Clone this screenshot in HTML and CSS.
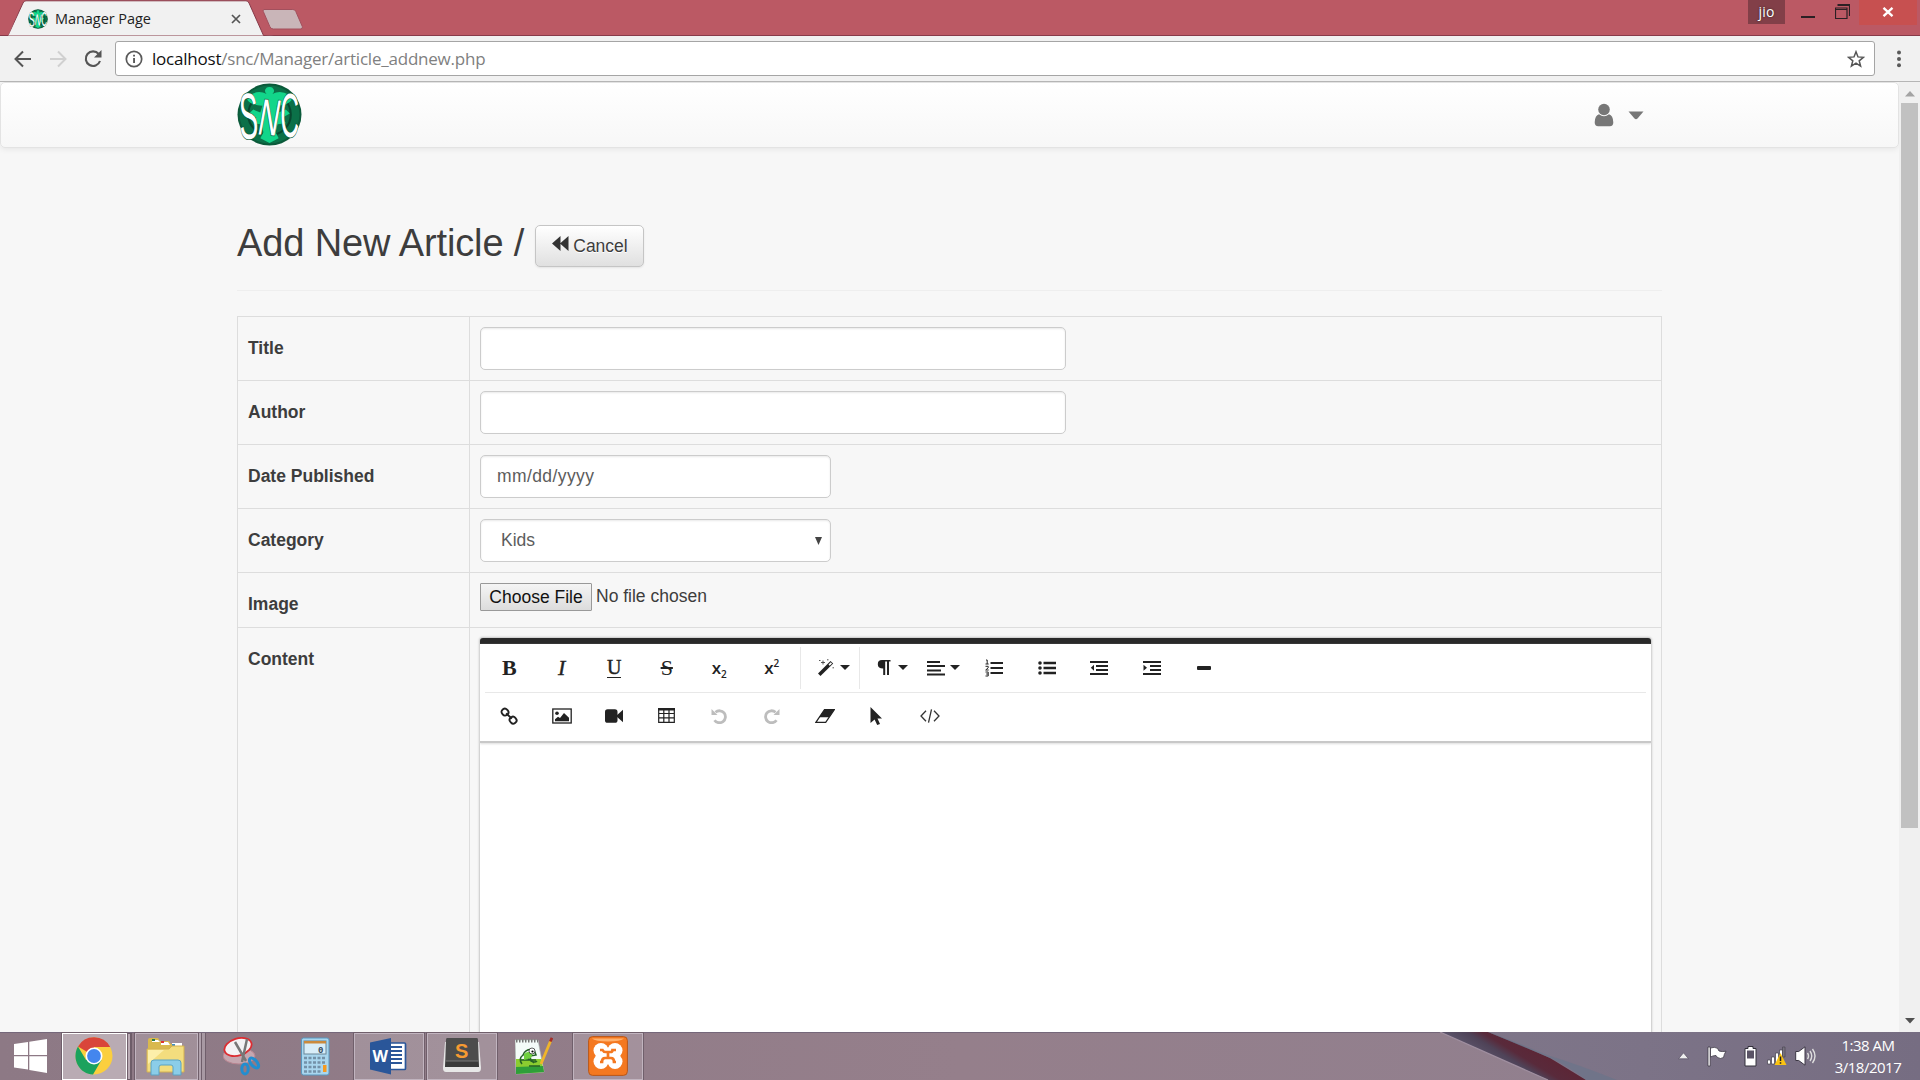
FILE: index.html
```
<!DOCTYPE html>
<html lang="en">
<head>
<meta charset="utf-8">
<title>Manager Page</title>
<link rel="stylesheet" href="styles.css">
</head>
<body>
<svg class="defs" aria-hidden="true">
  <defs>
    <symbol id="snc" viewBox="0 0 64 64">
      <circle cx="32" cy="32" r="31.5" fill="#0b5a3a"/>
      <circle cx="32" cy="32" r="29.5" fill="#0b7048"/>
      <circle cx="32" cy="32" r="21" fill="none" stroke="#08472f" stroke-width="2"/>
      <path fill="#12d68a" d="M32 4a4 4 0 0 1 3 7q8-4 16 1l3 5q-4 6-15 6l2 7 7-3 4 4-7 4 3 6-8 1-2 8 3 6-9 5-9-5 3-6-2-8-8-1 3-6-7-4 4-4 7 3 2-7q-11 0-15-6l3-5q8-5 16-1a4 4 0 0 1 3-7z"/>
      <g fill="#fff" stroke="#0b5a3a" stroke-width="1.5" paint-order="stroke" font-family="Liberation Sans, sans-serif">
        <text transform="translate(3 57) rotate(-2) scale(.42 1)" font-size="66">S</text>
        <text transform="translate(19 52) rotate(4) skewX(-6) scale(.54 1)" font-size="52">N</text>
        <text transform="translate(42.500 55) scale(.4 1)" font-size="64">C</text>
      </g>
    </symbol>
  </defs>
</svg>

<header class="browser">
  <div class="tabstrip">
    <svg class="tabshape" width="320" height="36" viewBox="0 0 320 36">
      <path d="M0 35.5H8L23 3Q24 .8 26 .8H246Q248 .8 249 3L263.500 35.500H320V36H0z" fill="#f1f1f1" stroke="#873a49"/>
      <path d="M263.800 9.500h29q2.500 0 3 2l6.500 15q1 2.500-2 2.500h-27q-2.500 0-3.500-2.500l-6.500-15q-.7-2 .5-2z" fill="#c9b5b8" stroke="#a2505d"/>
    </svg>
    <div class="tab">
      <svg class="favicon" width="20" height="20"><use href="#snc"/></svg>
      <span class="tab-title">Manager Page</span>
      <svg class="tab-close" width="10" height="10" viewBox="0 0 10 10"><path d="M1 1l8 8M9 1L1 9" stroke="#555" stroke-width="1.700"/></svg>
    </div>
    <div class="winctl">
      <span class="profile">jio</span>
      <svg class="wc-min" width="14" height="25" viewBox="0 0 14 25"><path d="M0 16h14v2H0z" fill="#2b2024"/></svg>
      <svg class="wc-max" width="15" height="25" viewBox="0 0 15 25"><path d="M.5 8h11.500v10.500H.5zM0 9.500h12M2.500 4.500h12v11.500M2.500 5.500h12" fill="none" stroke="#2b2024" stroke-width="1.200"/></svg>
      <span class="wc-close"><svg width="12" height="10" viewBox="0 0 12 10"><path d="M1.500.8l9 8.400M10.500.8l-9 8.400" stroke="#fff" stroke-width="2.300"/></svg></span>
    </div>
  </div>
  <div class="toolbar">
    <svg class="nav back" width="18" height="18" viewBox="0 0 18 18"><path d="M17 9H2M9 1.500L1.500 9 9 16.500" fill="none" stroke="#555" stroke-width="2"/></svg>
    <svg class="nav fwd" width="18" height="18" viewBox="0 0 18 18"><path d="M1 9h15M9 1.500L16.500 9 9 16.500" fill="none" stroke="#d0d0d0" stroke-width="2"/></svg>
    <svg class="nav reload" width="18" height="18" viewBox="0 0 18 18"><path d="M14.700 4A7.300 7.300 0 1 0 16 11" fill="none" stroke="#555" stroke-width="2.100"/><path d="M17.500 0v7.500H10z" fill="#555"/></svg>
    <div class="omnibox">
      <svg width="18" height="18" viewBox="0 0 18 18"><circle cx="9" cy="9" r="7.700" fill="none" stroke="#5a5a5a" stroke-width="1.700"/><path d="M8.100 8h1.900v5H8.100zM8.100 4.700h1.900v1.900H8.100z" fill="#5a5a5a"/></svg>
      <span class="url"><b>localhost</b>/snc/Manager/article_addnew.php</span>
      <svg class="star" width="18" height="18" viewBox="0 0 18 18"><path d="M9 1.800l2 5.100 5.400.4-4.200 3.500 1.400 5.300L9 13.200l-4.600 2.900 1.400-5.300L1.600 7.300 7 6.900z" fill="none" stroke="#555" stroke-width="1.500"/></svg>
    </div>
    <svg class="dots" width="6" height="18" viewBox="0 0 6 18"><g fill="#5a5a5a"><circle cx="3" cy="2.500" r="2"/><circle cx="3" cy="9" r="2"/><circle cx="3" cy="15.300" r="2"/></g></svg>
  </div>
</header>

<div class="viewport">
  <main class="page">
    <nav class="navbar">
      <svg class="logo" width="65" height="63" viewBox="0 0 64 64" preserveAspectRatio="none"><use href="#snc" width="64" height="64"/></svg>
      <div class="user">
        <svg width="20" height="24" viewBox="0 0 20 24"><circle cx="10" cy="6.500" r="5.800"/><path d="M5 11.300q5 4 10 0 4 1 4.300 8 0 4-3.500 4H4.200Q.7 23.300.7 19.300 1 12.300 5 11.300z"/></svg>
        <svg width="16" height="9" viewBox="0 0 16 9"><path d="M.5.500h15L9.500 7.500q-1.500 1.500-3 0z"/></svg>
      </div>
    </nav>
    <div class="container">
      <div class="heading">
        <h2>Add New Article /</h2>
        <span class="btn"><svg width="17" height="15" viewBox="0 0 17 15"><path d="M8.500 0v15L0 7.500zM16.500 0v15L8 7.500z" fill="#333"/></svg><span>Cancel</span></span>
      </div>
      <div class="form">
        <div class="row"><div class="label">Title</div><div class="cell"><div class="input wide"></div></div></div>
        <div class="row"><div class="label">Author</div><div class="cell"><div class="input wide"></div></div></div>
        <div class="row"><div class="label">Date Published</div><div class="cell"><div class="input date">mm/dd/yyyy</div></div></div>
        <div class="row"><div class="label">Category</div><div class="cell"><div class="input select"><span>Kids</span><svg width="7" height="8" viewBox="0 0 7 8"><path d="M0 0h7L3.500 8z" fill="#444"/></svg></div></div></div>
        <div class="row file-row"><div class="label">Image</div><div class="cell file"><span class="choose">Choose File</span><span class="nofile">No file chosen</span></div></div>
        <div class="row content-row"><div class="label">Content</div><div class="cell">
          <div class="editor">
            <div class="tools">
              <div class="toolrow first">
                <span class="tool"><b class="g bold">B</b></span>
                <span class="tool"><i class="g">I</i></span>
                <span class="tool"><span class="g under">U</span></span>
                <span class="tool"><span class="g strike">S</span></span>
                <span class="tool"><span class="x">x<sub>2</sub></span></span>
                <span class="tool"><span class="x">x<sup>2</sup></span></span>
                <span class="tool drop wand"><svg width="18" height="18" viewBox="0 0 18 18"><path d="M1 14.500L13.500 2l2.700 2.500L3.500 17z" fill="#222"/><path d="M11.500 5.500l2.300-2.200 1.200 1.200-2.300 2.200z" fill="#fff"/><path d="M6 1.500v4M4 3.500h4M2 1.500h1.500M10 .8h1.500M15.500 8.800H17" stroke="#444" stroke-width=".9"/></svg><em></em></span>
                <span class="tool drop para"><svg width="14" height="17" viewBox="0 0 14 17"><path d="M5 1h8.500v1.600H12V16h-2V2.600H8.200V16h-2V9.500Q.8 9.500.8 5.200.8 1 5 1z" fill="#222"/></svg><em></em></span>
                <span class="tool drop align"><svg width="18" height="16" viewBox="0 0 18 16"><path d="M0 2h13M0 6h18M0 10.500h14M0 14.500h18" stroke="#222" stroke-width="2.200"/></svg><em></em></span>
                <span class="tool ol"><svg width="18" height="18" viewBox="0 0 18 18"><path d="M5.500 4H18M5.500 9H18M5.500 14H18" stroke="#222" stroke-width="2.200"/><path d="M1 1h1.200v4M.5 5h3.200M.5 7.300h2.700v1.500L.7 11h3M.5 13h2.700v4H.5M1.200 15h2" fill="none" stroke="#222"/></svg></span>
                <span class="tool"><svg width="18" height="16" viewBox="0 0 18 16"><path d="M5.500 3H18M5.500 8H18M5.500 13H18" stroke="#222" stroke-width="2.300"/><g fill="#222"><circle cx="2" cy="3" r="1.800"/><circle cx="2" cy="8" r="1.800"/><circle cx="2" cy="13" r="1.800"/></g></svg></span>
                <span class="tool"><svg width="18" height="16" viewBox="0 0 18 16"><path d="M0 2h18M6 6h12M6 10h12M0 14h18" stroke="#222" stroke-width="2.100"/><path d="M4 4.800v6L.8 7.800z" fill="#222"/></svg></span>
                <span class="tool"><svg width="18" height="16" viewBox="0 0 18 16"><path d="M0 2h18M7 6h11M7 10h11M0 14h18" stroke="#222" stroke-width="2.100"/><path d="M.5 4.800v6L4 7.800z" fill="#222"/></svg></span>
                <span class="tool"><svg width="14" height="16" viewBox="0 0 14 16"><rect y="6" width="14" height="4" rx="1" fill="#222"/></svg></span>
              </div>
              <div class="toolrow second">
                <span class="tool"><svg width="18" height="18" viewBox="0 0 18 18"><g fill="none" stroke="#222" stroke-width="1.900"><rect x="1.800" y="1.600" width="6.300" height="6.800" rx="2.800" transform="rotate(-40 5 5)"/><rect x="9.800" y="9.800" width="6.300" height="6.800" rx="2.800" transform="rotate(-40 13 13)"/><path d="M6 6.500l6 5"/></g></svg></span>
                <span class="tool"><svg width="20" height="16" viewBox="0 0 20 16"><rect x=".8" y="1" width="18.400" height="14" fill="none" stroke="#222" stroke-width="1.300"/><circle cx="5" cy="5.200" r="1.800" fill="#222"/><path d="M3 13.300v-2l3-2.500 2 1.300 4-5 5 4.700v3.500z" fill="#222"/></svg></span>
                <span class="tool"><svg width="18" height="14" viewBox="0 0 18 14"><rect width="12.500" height="13.500" y=".3" rx="2.600" fill="#222"/><path d="M11 7l7-6.300v12.600z" fill="#222"/></svg></span>
                <span class="tool"><svg width="17" height="15" viewBox="0 0 17 15"><path d="M.7 1h15.600v13.300H.7zM.7 5.500h15.600M.7 9.900h15.600M5.800 1v13M11 1v13" fill="none" stroke="#222" stroke-width="1.200"/><path d="M0 0h17v2.500H0z" fill="#222"/></svg></span>
                <span class="tool"><svg width="17" height="16" viewBox="0 0 17 16"><path d="M4.500 4.200A6 6 0 1 1 3.500 12.200" fill="none" stroke="#bdbdbd" stroke-width="2.800"/><path d="M.5 1v6h6z" fill="#bdbdbd"/></svg></span>
                <span class="tool"><svg width="17" height="16" viewBox="0 0 17 16"><path d="M12.500 4.200A6 6 0 1 0 13.500 12.200" fill="none" stroke="#bdbdbd" stroke-width="2.800"/><path d="M16.500 1v6h-6z" fill="#bdbdbd"/></svg></span>
                <span class="tool wide-gap"><svg width="20" height="14" viewBox="0 0 20 14"><path d="M9.500.7h9.800L10.700 13.300H.9z" fill="#fff" stroke="#222" stroke-width="1.200"/><path d="M9.500.5h9.800L14 8.300H4.200z" fill="#222"/></svg></span>
                <span class="tool cursor"><svg width="12" height="18" viewBox="0 0 12 18"><path d="M.5 0L12 11.500H7.500L10 17l-2.800 1L4.600 12.600.5 16z" fill="#222"/></svg></span>
                <span class="tool wide-gap"><svg width="20" height="14" viewBox="0 0 20 14"><path d="M6 1.800L1 7l5 5.200M14 1.800L19 7l-5 5.200M11.500.4L8.500 13.600" fill="none" stroke="#333" stroke-width="1.300"/></svg></span>
              </div>
            </div>
            <div class="editbox"></div>
          </div>
        </div></div>
      </div>
    </div>
  </main>
  <aside class="scrollbar">
    <svg width="10" height="6" viewBox="0 0 10 6"><path d="M5 0l5 5.500H0z" fill="#a3a3a3"/></svg>
    <div class="thumb"></div>
    <svg class="down" width="10" height="6" viewBox="0 0 10 6"><path d="M0 0h10L5 5.500z" fill="#505050"/></svg>
  </aside>
</div>

<footer class="taskbar">
  <svg class="streak" width="560" height="48" viewBox="0 0 560 48">
    <defs>
      <linearGradient id="wall" x2="1"><stop offset="0" stop-color="#7f7689"/><stop offset=".4" stop-color="#7c7387"/><stop offset="1" stop-color="#766d82"/></linearGradient>
      <linearGradient id="band" gradientUnits="userSpaceOnUse" x1="130" y1="28" x2="147" y2="0"><stop offset="0" stop-color="#5a5268"/><stop offset=".35" stop-color="#4f4358"/><stop offset=".6" stop-color="#592a3b"/><stop offset="1" stop-color="#5c2636"/></linearGradient>
    </defs>
    <path d="M100 0H560V48H200z" fill="url(#wall)"/>
    <path d="M80 0h48q35 14 62 26l36 22h-38z" fill="url(#band)"/>
    <path d="M80 0L188 48" stroke="#a08fa0" stroke-width="1.200"/>
    <path d="M129 0q30 11 58 23 30 9 70 25h-31q-16-13-36-22-31-13-62-26z" fill="#67758b" opacity=".6"/>
  </svg>
  <div class="apps">
    <svg class="start" width="33" height="34" viewBox="0 0 33 34"><path d="M0 5l14-2v13H0zM15.300 2.700L33 0v16H15.300zM0 17.300h14v13.200L0 28.500zM15.300 17.300H33V34l-17.700-3z" fill="#fff"/></svg>
    <div class="app active double"><svg width="38" height="38" viewBox="0 0 38 38"><circle cx="19" cy="19" r="18.500" fill="#fbcf3f"/><path d="M19 19L3 9.500A18.500 18.500 0 0 1 35.200 10H19z" fill="#d9453a"/><path d="M3 9.600A18.500 18.500 0 0 0 18 37.500L26.500 23 19 19 11 23z" fill="#1ba25d"/><circle cx="19" cy="19" r="8.500" fill="#fff"/><circle cx="19" cy="19" r="6.900" fill="#4486ee"/></svg></div>
    <div class="app triple"><svg width="40" height="39" viewBox="0 0 40 39"><path d="M2 3q0-2 2-2h8l2 3h9l2 3h11v10H2z" fill="#d9b94e"/><path d="M6 3h6l2 2H6zM15 5h7l2 3h-9z" fill="#fff"/><path d="M6 2h3v2H6z" fill="#287c4b"/><path d="M15 4h3v2h-3z" fill="#d33"/><path d="M26 6h10v5H26z" fill="#fff"/><path d="M26 7h3v3h-3z" fill="#3f8fc9"/><path d="M1 12h22l3-3h12v26H1z" fill="#f3dd7e" stroke="#d4b151"/><path d="M2 13h16L2 27z" fill="#fff6bd" opacity=".7"/><path d="M5 38V26q0-3 3-3h24q3 0 3 3v12h-8v-8q0-2-2-2H15q-2 0-2 2v8z" fill="#8bcde8" stroke="#5aa3c4"/></svg></div>
    <svg class="snip" width="38" height="39" viewBox="0 0 38 39"><ellipse cx="16" cy="19" rx="16" ry="8" fill="#c5a7b0" stroke="#b98490"/><ellipse cx="15" cy="10" rx="14" ry="8.500" fill="#f4f2f4" stroke="#dc2d32" stroke-width="1.800" transform="rotate(-17 15 10)"/><path d="M12 5l11 19M24 2L19 25" stroke="#777" stroke-width="2.500"/><g fill="none" stroke="#218ed0" stroke-width="3"><ellipse cx="31" cy="26" rx="3" ry="6" transform="rotate(-42 31 26)"/><ellipse cx="22" cy="32" rx="3.200" ry="5"/></g></svg>
    <svg class="calc" width="29" height="39" viewBox="0 0 29 39"><rect x=".5" y="1" width="27.500" height="37" rx="2" fill="#a9d6ee" stroke="#5898bf"/><rect x="3" y="4" width="22" height="13" fill="#d8edf8" stroke="#6b8698"/><path d="M3 4h22v2.500H3z" fill="#ca8a3d"/><text x="17" y="16" font-family="Liberation Mono, monospace" font-weight="700" font-size="9" fill="#31485c">0</text><path d="M3 21h22M3 25.500h22M3 30h17M3 34.500h17" stroke="#7391a8" stroke-width="2.600" stroke-dasharray="3 1.500"/><path d="M22 28h3.500v7H22z" fill="#f59a21"/></svg>
    <div class="app word"><svg width="37" height="37" viewBox="0 0 37 37"><rect x="18" y="5" width="17.500" height="26.500" rx="1" fill="#fff" stroke="#2a5699" stroke-width="1.700"/><path d="M21 9h11M21 13h11M21 17h11M21 21h11M21 25h11" stroke="#2a5699" stroke-width="2"/><path d="M0 4.500L21 0v36.500L0 31.500z" fill="#2a5699"/><text x="2.500" y="24" font-family="Open Sans, sans-serif" font-weight="700" font-size="16" fill="#fff">W</text></svg></div>
    <div class="app sublime"><svg width="38" height="37" viewBox="0 0 38 37"><path d="M2 4h34l2 26q0 4-3 4H3q-3 0-3-4z" fill="#e7e7e7"/><path d="M4 0h30q1 0 1 2l1 27H2L3 2q0-2 1-2z" fill="#4c4c4c"/><path d="M3 23h32l1 6H2z" fill="#3a3a3a"/><path d="M3 23h32" stroke="#777"/><text x="12" y="20" font-family="Liberation Sans, sans-serif" font-weight="700" font-size="20" fill="#f69a32">S</text></svg></div>
    <svg class="npp" width="38" height="38" viewBox="0 0 38 38"><path d="M0 3h23l6 32-28 2z" fill="#f4fbf8" stroke="#a9b9b0" stroke-width=".6"/><path d="M1 22h25l3 13-28 2z" fill="#8bcd30"/><path d="M1 30l27-1 1 6-28 2z" fill="#2f9f39"/><path d="M1 4h22" stroke="#777" stroke-width="3" stroke-dasharray="1.500 1.500"/><path d="M7 27q-4-5 1-9 3-7 11-5l2 5-6 1 1 5q4 2 6 0M5 23h16M9 18l10 8M14 29h11" fill="none" stroke="#256226" stroke-width="1.500"/><path d="M9 17q5-4 9-1l-2 5-7 2z" fill="#6fd03c"/><circle cx="17" cy="14" r="3" fill="#fff" stroke="#222" stroke-width=".7"/><circle cx="17.500" cy="14.500" r="1.100"/><path d="M26 27l10-24" stroke="#efb52a" stroke-width="2.800"/><path d="M35.300 4.500L37 .8" stroke="#a52e29" stroke-width="2.800"/></svg>
    <div class="app xampp"><svg width="40" height="40" viewBox="0 0 40 40"><rect x=".6" y=".6" width="38.800" height="38.800" rx="4" fill="#f47820" stroke="#b85719"/><path d="M4 2.500h32q-3 3-16 3T4 2.500z" fill="#ffb16e"/><g fill="#fff"><circle cx="13" cy="14.500" r="7.500"/><circle cx="27" cy="14.500" r="7.500"/><circle cx="13" cy="25.500" r="7.500"/><circle cx="27" cy="25.500" r="7.500"/><path d="M13 12h14v16H13z"/></g><path d="M12 14h2.500q1 2 3 2h5q2 0 2-2H28M12 26h2q0-4 3-4h6q3 0 3 4h2M20 16v6" fill="none" stroke="#f47820" stroke-width="2.700"/></svg></div>
  </div>
  <div class="tray">
    <svg class="t-arrow" width="11" height="8" viewBox="0 0 11 8"><path d="M5.500.8l5 6H.5z" fill="#eee" stroke="#554d60" stroke-width=".7"/></svg>
    <svg class="t-flag" width="20" height="21" viewBox="0 0 20 21"><path d="M1 1h2.200v19H1z" fill="#fff" stroke="#3c3744" stroke-width=".8"/><path d="M3.500 2q4-1.500 7 .3l1.500 2.700q3 1 7 .2-2 3-2.500 6.300-3 2-6 0l-1.500-2q-3 0-5.500 1.500z" fill="#fff" stroke="#3c3744" stroke-width=".8"/></svg>
    <svg class="t-bat" width="13" height="21" viewBox="0 0 13 21"><path d="M4 .5h5v2h3V20H1V2.500h3z" fill="#fff" stroke="#33303b"/><path d="M3 4.500h7v8H3z" fill="#5a5365"/></svg>
    <svg class="t-sig" width="20" height="20" viewBox="0 0 20 20"><path d="M.5 14h3v4h-3zM4.500 11h3v7h-3zM8.500 7h3v11h-3z" fill="#fff" stroke="#44404c" stroke-width=".7"/><path d="M12.500 4h3v14h-3z" fill="#fff" stroke="#44404c" stroke-width=".7"/><path d="M15.500 1h2.500v10h-2.500z" fill="#77737f" stroke="#44404c" stroke-width=".6"/><path d="M13.500 7l6 12h-12z" fill="#fbc311"/><path d="M13.500 10.500v4.500M13.500 16.200v1.500" stroke="#222" stroke-width="1.500"/></svg>
    <svg class="t-vol" width="21" height="20" viewBox="0 0 21 20"><path d="M.7 5.500h3L10 .8v18.400L3.700 14.500h-3z" fill="#fff" stroke="#3c3744"/><path d="M12.500 7q2 3 0 6M15 5q3.500 5 0 10M17.500 3q5 7 0 14" fill="none" stroke="#ddd" stroke-width="1.400"/></svg>
    <div class="clock"><span>1:38 AM</span><span>3/18/2017</span></div>
  </div>
</footer>
</body>
</html>
```
FILE: styles.css
```
* { box-sizing: border-box; }
body { margin: 0; width: 1920px; height: 1080px; overflow: hidden; display: flex; flex-direction: column; background: #f7f7f7; color: #3d3d3d; font: 17.5px/25px "Liberation Sans", Arial, sans-serif; }
svg { display: block; flex: none; }
.defs { position: absolute; width: 0; height: 0; }

/* Browser frame */
.browser { height: 82px; flex: none; background: #f1f1f1; border-bottom: 1px solid #b5b5b5; font-family: "Open Sans", "Noto Sans", sans-serif; }
.tabstrip { position: relative; height: 36px; display: flex; justify-content: space-between; background: #bb5964; border-bottom: 1px solid #873a49; }
.tabshape { position: absolute; left: 0; top: 0; clip-path: polygon(8px 36px, 23px 0, 302px 0, 304px 32px, 264px 36px); }
.tab { position: relative; display: flex; align-items: center; height: 36px; padding: 2px 0 0 28px; width: 248px; }
.tab-title { margin: -2px 0 0 7px; font-size: 14.5px; color: #222; letter-spacing: -.05px; white-space: nowrap; }
.tab-close { margin-left: auto; margin-right: 7px; }
.winctl { display: flex; height: 25px; margin-right: 3px; }
.profile { width: 37px; height: 24px; background: #823f48; color: #fff; font-size: 14px; line-height: 23px; text-align: center; letter-spacing: .2px; text-shadow: 0 0 2px #222; }
.wc-min { margin-left: 16px; }
.wc-max { margin-left: 20px; }
.wc-close { width: 58px; height: 25px; margin-left: 9px; background: #c75050; display: flex; align-items: center; justify-content: center; padding: 0 1px 2px 0; }
.toolbar { display: flex; align-items: center; height: 45px; padding: 0 18px 0 14px; }
.fwd { margin-left: 17px; }
.reload { margin-left: 17px; }
.omnibox { flex: 1; display: flex; align-items: center; height: 35px; margin: 0 21px 0 13px; padding: 0 9px 0 9px; background: #fff; border: 1px solid #a5a5a5; border-radius: 3px; }
.url { margin-left: 9px; font-size: 17px; letter-spacing: -.22px; color: #808080; }
.url b { font-weight: 400; color: #111; }
.star { margin-left: auto; }

/* Page */
.viewport { flex: 1; min-height: 0; display: flex; overflow: hidden; }
.page { width: 1899px; overflow: hidden; }
.navbar { display: flex; align-items: center; justify-content: space-between; height: 66px; padding: 0 254px 0 236px; background: linear-gradient(#fff, #f7f7f7); border: 1px solid #e3e3e3; border-radius: 5px; box-shadow: 0 1px 6px rgba(0,0,0,.08); }
.logo { margin-top: -1px; }
.user { display: flex; align-items: center; gap: 14px; fill: #777; }
.container { width: 1425px; margin-left: 237px; }
.heading { display: flex; height: 143px; border-bottom: 1px solid #eee; }
.heading h2 { margin: 70px 0 0; width: 298px; font-size: 38px; line-height: 50px; font-weight: 400; letter-spacing: -.12px; white-space: nowrap; }
.btn { display: flex; justify-content: center; gap: 4px; height: 42px; width: 109px; margin-top: 77px; padding: 8px 0 0 1px; border: 1px solid #c5c5c5; border-radius: 5px; background: linear-gradient(#fff, #e0e0e0); box-shadow: 0 1px 2px rgba(0,0,0,.08); text-shadow: 0 1px #fff; }
.btn svg { margin-top: 2px; }
.form { margin-top: 25px; border: 1px solid #ddd; border-bottom: 0; }
.row { display: flex; height: 64px; border-bottom: 1px solid #ddd; }
.label { width: 232px; padding: 19px 0 0 10px; font-weight: 700; border-right: 1px solid #ddd; }
.cell { flex: 1; padding: 10px; }
.input { height: 43px; padding: 8px 16px; line-height: 25px; background: #fff; border: 1px solid #ccc; border-radius: 5px; box-shadow: inset 0 1px 2px rgba(0,0,0,.09); color: #5c5c5c; }
.wide { width: 586px; }
.date, .select { width: 351px; }
.date { letter-spacing: .4px; }
.select { display: flex; justify-content: space-between; align-items: center; padding: 0 8px 0 20px; }
.file-row { height: 55px; }
.file { display: flex; gap: 4px; }
.choose { height: 28px; width: 112px; border: 1px solid #999; background: linear-gradient(#f5f5f5, #dcdcdc); color: #111; text-align: center; line-height: 26px; border-radius: 1px; }
.nofile { line-height: 27px; }
.content-row { height: 460px; }
.editor { width: 1171px; height: 450px; border-top: 6px solid #292929; border-radius: 3px 3px 0 0; background: #fff; box-shadow: 0 0 2px 1px #c6c6c6; }
.tools { height: 99px; padding: 0 5px; border-bottom: 2px solid #c8c8c8; box-shadow: 0 1px 2px #ddd; }
.toolrow { display: flex; height: 47px; align-items: center; color: #222; }
.first { height: 49px; padding-bottom: 1px; border-bottom: 1px solid #e8e8e8; }
.second { height: 45px; }
.toolrow .tool:first-child { width: 50.5px; padding-right: 2px; }
.tool { width: 52.5px; height: 100%; display: flex; align-items: center; justify-content: center; flex: none; }
.drop { gap: 6px; height: 42px; }
.drop em { border: 5px solid transparent; border-top-color: #222; border-bottom: 0; }
.wand { width: 60px; margin-left: 2px; padding-left: 6px; gap: 5px; border: 1px solid #e8e8e8; border-width: 0 1px; }
.para { width: 51px; margin-left: 7px; gap: 7px; }
.align { width: 51px; gap: 5px; margin-left: 0; }
.ol { margin-left: -1px; }
.g { font: 22px/24px "Liberation Serif", serif; }
.bold { font-weight: 700; }
i.g { font-style: italic; -webkit-text-stroke: .4px #222; }
.under { font-size: 20px; line-height: 19px; border-bottom: 1px solid #222; -webkit-text-stroke: .4px #222; }
.strike { text-decoration: line-through; }
.x { font: 600 17px/20px "Open Sans", sans-serif; }
.x sub, .x sup { font-size: 10px; line-height: 0; }
.cursor { padding-right: 2px; }
.wide-gap { padding-left: 1px; }
.scrollbar { width: 21px; background: #f0f0f0; padding: 9px 2px 8px; display: flex; flex-direction: column; align-items: flex-start; }
.scrollbar svg { margin-left: 4px; }
.thumb { width: 17px; height: 725px; margin-top: 6px; background: #c1c1c1; }
.scrollbar .down { margin-top: auto; }

/* Taskbar */
.taskbar { position: relative; flex: none; height: 48px; display: flex; justify-content: space-between; background: linear-gradient(90deg, #8d7985, #957f8b 50%, #8f8090); box-shadow: inset 0 1px #75677a; font-family: "Open Sans", sans-serif; }
.streak { position: absolute; right: 0; top: 0; }
.apps, .tray { position: relative; display: flex; align-items: center; }
.start { margin: 0 15px 0 14px; }
.app { display: flex; align-items: center; justify-content: center; height: 47px; width: 70px; padding-right: 1px; background: rgba(255,255,255,.16); border: 1px solid #c1b4bf; outline: 1px solid #705f6b; outline-offset: 0; }
.active { background: #b9abb3; border: 1px solid #fff; }
.double { width: 65px; padding-right: 2px; box-shadow: 4px 0 0 -1px #baaab4, 5px 0 #6d5c68; }
.triple { width: 63px; margin-left: 8px; box-shadow: 3px 0 #b0a1ac, 4px 0 #705f6b, 7px 0 #a899a3, 8px 0 #705f6b; }
.snip { margin-left: 25px; }
.calc { margin-left: 40px; }
.word { margin-left: 24px; }
.sublime { margin-left: 3px; }
.npp { margin-left: 18px; }
.xampp { margin-left: 20px; }
.t-flag { margin-left: 18px; }
.t-bat { margin-left: 17px; }
.t-sig { margin-left: 10px; }
.t-vol { margin-left: 8px; }
.clock { width: 86px; margin: 0 9px 0 9px; display: flex; flex-direction: column; font-size: 15px; line-height: 22px; text-align: center; color: #fff; letter-spacing: -.5px; }
```
